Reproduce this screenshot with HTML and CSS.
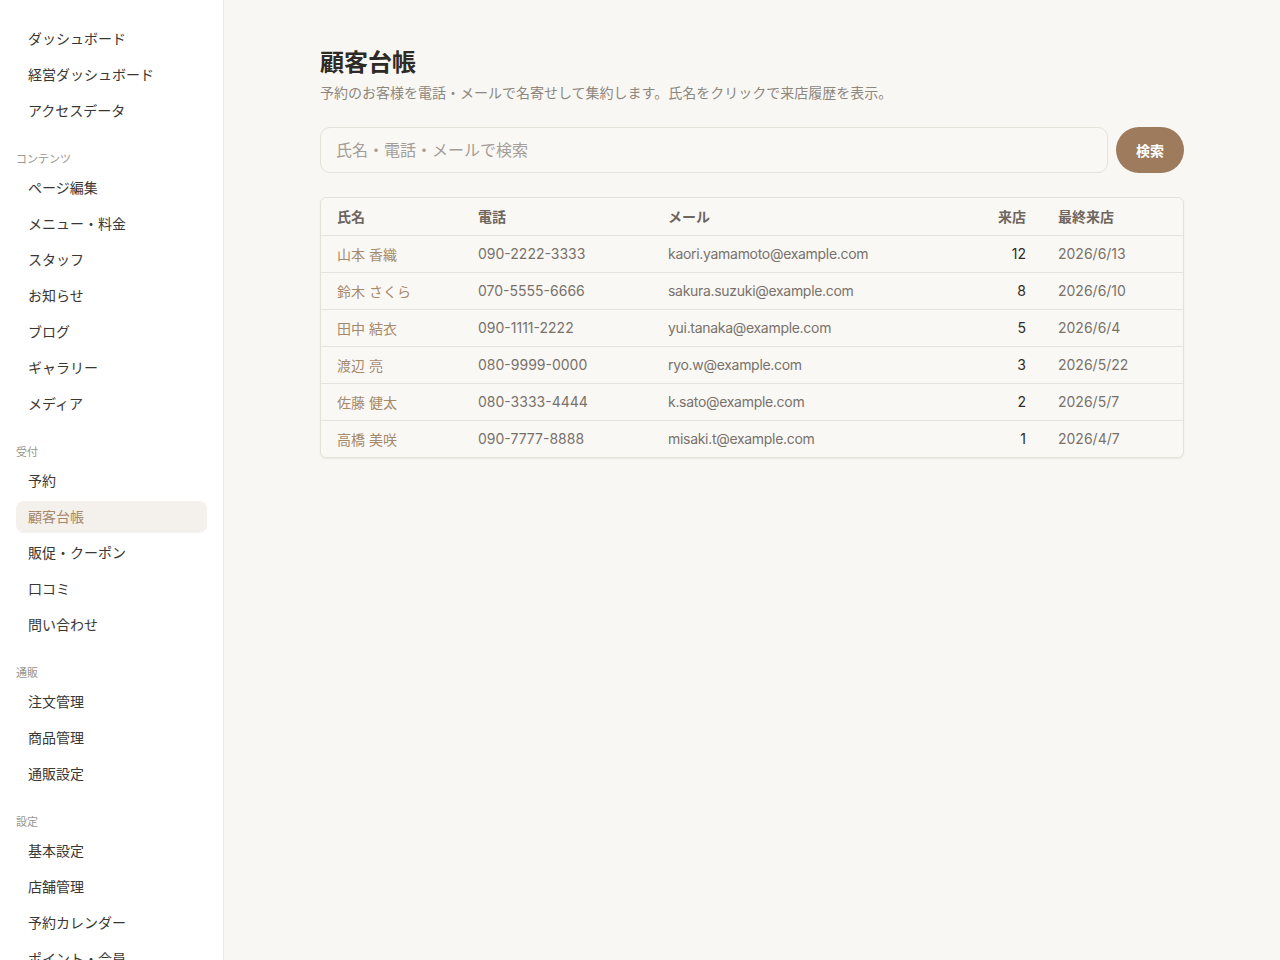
FILE: index.html
```html
<!DOCTYPE html>
<html lang="ja">
<head>
  <meta charset="UTF-8" />
  <meta name="viewport" content="width=device-width, initial-scale=1.0"/>
  <title>顧客台帳</title>
  <link rel="stylesheet" href="styles.css">
</head>
<body>
  <aside class="sidebar">
    <nav class="nav">
      <div class="nav-group">
        <a class="nav-item" href="#">ダッシュボード</a>
        <a class="nav-item" href="#">経営ダッシュボード</a>
        <a class="nav-item" href="#">アクセスデータ</a>
      </div>
      <div class="nav-group">
        <div class="nav-label">コンテンツ</div>
        <a class="nav-item" href="#">ページ編集</a>
        <a class="nav-item" href="#">メニュー・料金</a>
        <a class="nav-item" href="#">スタッフ</a>
        <a class="nav-item" href="#">お知らせ</a>
        <a class="nav-item" href="#">ブログ</a>
        <a class="nav-item" href="#">ギャラリー</a>
        <a class="nav-item" href="#">メディア</a>
      </div>
      <div class="nav-group">
        <div class="nav-label">受付</div>
        <a class="nav-item" href="#">予約</a>
        <a class="nav-item active" href="#">顧客台帳</a>
        <a class="nav-item" href="#">販促・クーポン</a>
        <a class="nav-item" href="#">口コミ</a>
        <a class="nav-item" href="#">問い合わせ</a>
      </div>
      <div class="nav-group">
        <div class="nav-label">通販</div>
        <a class="nav-item" href="#">注文管理</a>
        <a class="nav-item" href="#">商品管理</a>
        <a class="nav-item" href="#">通販設定</a>
      </div>
      <div class="nav-group">
        <div class="nav-label">設定</div>
        <a class="nav-item" href="#">基本設定</a>
        <a class="nav-item" href="#">店舗管理</a>
        <a class="nav-item" href="#">予約カレンダー</a>
        <a class="nav-item" href="#">ポイント・会員</a>
      </div>
    </nav>
  </aside>

  <main class="main">
    <div class="container">
      <h1 class="page-title">顧客台帳</h1>
      <p class="page-desc">予約のお客様を電話・メールで名寄せして集約します。氏名をクリックで来店履歴を表示。</p>

      <form class="search" onsubmit="return false">
        <input class="search-input" type="text" placeholder="氏名・電話・メールで検索" />
        <button class="search-btn" type="submit">検索</button>
      </form>

      <div class="table-card">
        <table class="customers">
          <colgroup>
            <col class="col-name">
            <col class="col-tel">
            <col>
            <col class="col-visits">
            <col class="col-last">
          </colgroup>
          <thead>
            <tr>
              <th>氏名</th>
              <th>電話</th>
              <th>メール</th>
              <th class="num">来店</th>
              <th>最終来店</th>
            </tr>
          </thead>
          <tbody>
            <tr>
              <td><a class="name" href="#">山本 香織</a></td>
              <td class="tel">090-2222-3333</td>
              <td class="mail">kaori.yamamoto@example.com</td>
              <td class="num">12</td>
              <td class="date">2026/6/13</td>
            </tr>
            <tr>
              <td><a class="name" href="#">鈴木 さくら</a></td>
              <td class="tel">070-5555-6666</td>
              <td class="mail">sakura.suzuki@example.com</td>
              <td class="num">8</td>
              <td class="date">2026/6/10</td>
            </tr>
            <tr>
              <td><a class="name" href="#">田中 結衣</a></td>
              <td class="tel">090-1111-2222</td>
              <td class="mail">yui.tanaka@example.com</td>
              <td class="num">5</td>
              <td class="date">2026/6/4</td>
            </tr>
            <tr>
              <td><a class="name" href="#">渡辺 亮</a></td>
              <td class="tel">080-9999-0000</td>
              <td class="mail">ryo.w@example.com</td>
              <td class="num">3</td>
              <td class="date">2026/5/22</td>
            </tr>
            <tr>
              <td><a class="name" href="#">佐藤 健太</a></td>
              <td class="tel">080-3333-4444</td>
              <td class="mail">k.sato@example.com</td>
              <td class="num">2</td>
              <td class="date">2026/5/7</td>
            </tr>
            <tr>
              <td><a class="name" href="#">高橋 美咲</a></td>
              <td class="tel">090-7777-8888</td>
              <td class="mail">misaki.t@example.com</td>
              <td class="num">1</td>
              <td class="date">2026/4/7</td>
            </tr>
          </tbody>
        </table>
      </div>
    </div>
  </main>
</body>
</html>
```

FILE: styles.css
```css
* { margin: 0; padding: 0; box-sizing: border-box; }

html, body { height: 100%; }

body {
  display: flex;
  background-color: #f9f7f3;
  font-family: Inter, 'Noto Sans CJK JP', sans-serif;
  color: #333;
  overflow: hidden;
}

/* sidebar */

.sidebar {
  width: 224px;
  flex-shrink: 0;
  height: 100vh;
  background: #fff;
  border-right: 1px solid #ebe7e1;
  overflow: hidden;
}

.nav {
  padding: 23px 16px 16px;
  display: flex;
  flex-direction: column;
}

.nav-group + .nav-group {
  margin-top: 20px;
}

.nav-label {
  height: 16px;
  line-height: 16px;
  font-size: 11px;
  color: #9a958e;
  margin-bottom: 5px;
}

.nav-item {
  display: block;
  height: 32px;
  line-height: 32px;
  padding: 0 12px;
  margin-bottom: 4px;
  border-radius: 8px;
  font-size: 14px;
  color: #3a3632;
  text-decoration: none;
}

.nav-item.active {
  background: #f4f0eb;
  color: #a5896b;
}

/* main */

.main {
  flex: 1;
  height: 100vh;
  overflow: hidden;
}

.container {
  max-width: 864px;
  margin: 0 auto;
  padding-top: 47px;
}

.page-title {
  font-size: 24px;
  font-weight: 700;
  line-height: 32px;
  color: #2e2a26;
}

.page-desc {
  margin-top: 3px;
  font-size: 14px;
  line-height: 22px;
  color: #8d8780;
}

.search {
  display: flex;
  gap: 8px;
  margin-top: 23px;
}

.search-input {
  flex: 1;
  height: 46px;
  padding: 0 15px;
  background: #faf8f5;
  border: 1px solid #e6e1d9;
  border-radius: 10px;
  font-family: inherit;
  font-size: 16px;
  color: #333;
}

.search-input::placeholder {
  color: #a39e97;
}

.search-input:focus {
  outline: none;
  border-color: #c9b8a5;
}

.search-btn {
  width: 68px;
  height: 46px;
  border: none;
  border-radius: 23px;
  background: #9d7b5c;
  color: #fff;
  font-family: inherit;
  font-size: 14px;
  font-weight: 700;
  cursor: pointer;
}

.table-card {
  margin-top: 24px;
  background: #faf8f5;
  border: 1px solid #e6e1d9;
  border-radius: 6px;
  box-shadow: 0 1px 2px rgba(0, 0, 0, 0.06);
  overflow: hidden;
}

.customers {
  width: 100%;
  border-collapse: collapse;
  table-layout: fixed;
}

.col-name { width: 141px; }
.col-tel { width: 190px; }
.col-visits { width: 80px; }
.col-last { width: 141px; }

.customers th,
.customers td {
  height: 37px;
  padding: 0 16px;
  text-align: left;
  font-size: 14px;
  white-space: nowrap;
}

.customers th {
  font-weight: 700;
  color: #6e665e;
  border-bottom: 1px solid #e8e3dc;
}

.customers tbody td {
  border-top: 1px solid #e8e3dc;
}

.customers tbody tr:first-child td {
  border-top: none;
}

.customers .num {
  text-align: right;
  color: #2e2a26;
}

.customers th.num { color: #6e665e; }

.name {
  color: #a5896b;
  text-decoration: none;
}

.tel,
.mail,
.date {
  color: #78726b;
}

.mail {
  letter-spacing: -0.3px;
}
```
